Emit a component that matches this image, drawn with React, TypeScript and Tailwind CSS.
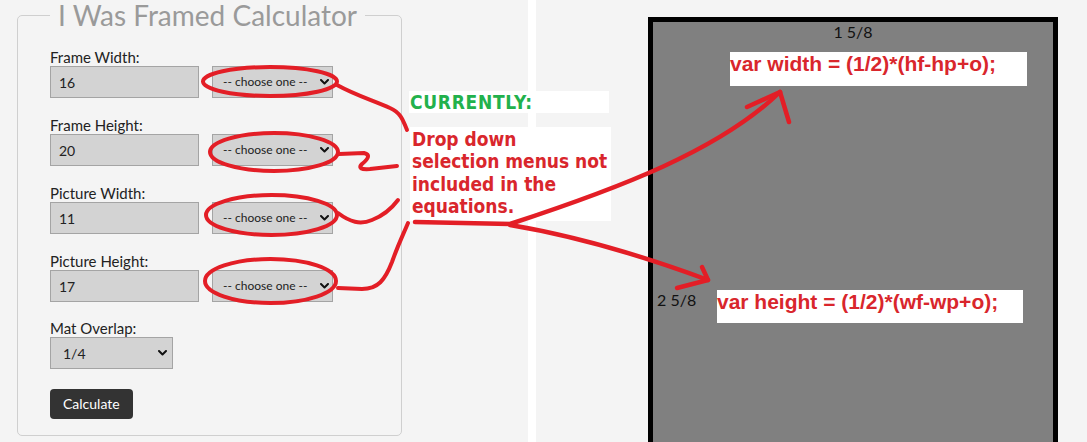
import React from 'react';

const fields = [
  { label: 'Frame Width:', value: '16' },
  { label: 'Frame Height:', value: '20' },
  { label: 'Picture Width:', value: '11' },
  { label: 'Picture Height:', value: '17' },
];

const Chevron = () => (
  <svg width="9" height="6" viewBox="0 0 9 6" fill="none">
    <path d="M1 1 L4.5 4.5 L8 1" stroke="#111" strokeWidth="2" strokeLinecap="round" strokeLinejoin="round" />
  </svg>
);

const FieldRow = ({ label, value }: { label: string; value: string }) => (
  <div className="flex flex-col">
    <label className="block text-[15px] leading-[17px] text-[#222]">{label}</label>
    <div className="flex gap-[13px] h-[32px]">
      <div className="w-[149px] h-[32px] bg-[#d3d3d3] border border-[#a4a4a4] pl-[8px] flex items-center text-[14px] text-[#222]">
        {value}
      </div>
      <div className="w-[121px] h-[32px] bg-[#d3d3d3] border border-[#a4a4a4] pl-[10px] pr-[3px] flex items-center justify-between text-[12px] text-[#222]">
        <span>-- choose one --</span>
        <Chevron />
      </div>
    </div>
  </div>
);

const Annotations = () => (
  <svg className="absolute top-0 left-0 pointer-events-none" width="1087" height="442" viewBox="0 0 1087 442" fill="none">
    <g stroke="#e31e26" strokeWidth="4" strokeLinecap="round" strokeLinejoin="round">
      <ellipse cx="270" cy="81.5" rx="67" ry="14.5" />
      <ellipse cx="274" cy="152" rx="64" ry="19" />
      <ellipse cx="271.5" cy="215" rx="65.5" ry="20" />
      <ellipse cx="270.5" cy="281" rx="65.5" ry="22" />
      <path d="M337 85 C355 95 372 100 390 108 C400 112 403 120 407 130" />
      <path d="M339 154 L364 153 Q373 155 362 164 Q356 170 370 169 L397 166" />
      <path d="M338 213 C350 222 360 225 372 220 C385 215 392 208 398 200" />
      <path d="M338 288 L362 289 C378 289 385 280 392 262 C398 245 403 235 408 223" />
      <path d="M415 222 L510 224 C620 188 720 150 780 92" strokeWidth="4.5" />
      <path d="M747 107 L780 92 L789 122" strokeWidth="4.5" />
      <path d="M510 225 Q600 240 708 280" strokeWidth="4.5" />
      <path d="M702 267 L708 280 L677 288" strokeWidth="4.5" />
    </g>
  </svg>
);

export default function App() {
  return (
    <div className="relative w-[1087px] h-[442px] overflow-hidden bg-[#f4f4f4] flex font-['Lato',sans-serif]">
      <div className="w-[528px] pl-[17px]">
        <fieldset className="w-[385px] border border-[#cfcfcf] rounded-[5px] pl-[32px] pt-[19px] pb-[16px]">
          <legend className="px-2 text-[28px] leading-[30px] text-[#9a9a9a]">I Was Framed Calculator</legend>
          <div className="flex flex-col gap-[19px]">
            {fields.map((f) => (
              <FieldRow key={f.label} label={f.label} value={f.value} />
            ))}
          </div>
          <label className="block mt-[18px] text-[15px] leading-[17px] text-[#222]">Mat Overlap:</label>
          <div className="w-[123px] h-[32px] bg-[#d3d3d3] border border-[#a4a4a4] pl-[12px] pr-[5px] flex items-center justify-between text-[14px] text-[#222]">
            <span>1/4</span>
            <Chevron />
          </div>
          <button className="mt-[20px] h-[30px] px-[13px] bg-[#333] rounded-[4px] text-white text-[14px] leading-[30px]">
            Calculate
          </button>
        </fieldset>
      </div>

      <div className="w-[8px] bg-white" />

      <div className="flex-1 pl-[112px] pt-[17px]">
        <div className="w-[410px] h-[440px] border-[5px] border-black bg-[#808080] flex flex-col">
          <div className="text-center text-[16px] leading-[20px] text-[#111]">1 5/8</div>
          <div className="ml-[77px] mt-[10px] w-[297px] h-[34px] bg-white font-['Liberation_Sans',sans-serif] font-bold text-[21px] leading-[24px] text-[#d9262c] whitespace-nowrap">
            var width = (1/2)*(hf-hp+o);
          </div>
          <div className="mt-[204px] flex">
            <div className="w-[64px] pl-[4px] text-[16px] leading-[20px] text-[#111]">2 5/8</div>
            <div className="w-[306px] h-[33px] bg-white font-['Liberation_Sans',sans-serif] font-bold text-[21px] leading-[24px] text-[#d9262c] whitespace-nowrap">
              var height = (1/2)*(wf-wp+o);
            </div>
          </div>
        </div>
      </div>

      <div className="absolute left-[409px] top-[91px] w-[200px] h-[22px] bg-white pl-[1px] font-['DejaVu_Sans_Condensed','DejaVu_Sans',sans-serif] font-bold font-stretch-condensed tracking-[0.7px] text-[19px] leading-[22px] text-[#22b14c]">
        CURRENTLY:
      </div>
      <div className="absolute left-[410px] top-[127px] w-[201px] h-[94px] bg-white pl-[2px] pt-[1px] font-['DejaVu_Sans_Condensed','DejaVu_Sans',sans-serif] font-bold font-stretch-condensed text-[19px] leading-[22.3px] text-[#d9262c]">
        Drop down<br />selection menus not<br />included in the<br />equations.
      </div>

      <Annotations />
    </div>
  );
}
